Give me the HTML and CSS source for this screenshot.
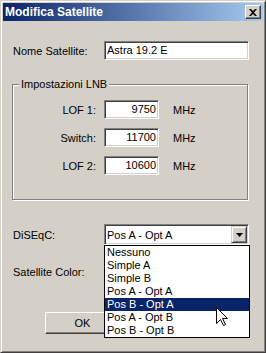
FILE: index.html
```html
<!DOCTYPE html>
<html lang="it">
<head>
    <meta charset="UTF-8">
    <title>Modifica Satellite</title>
    <link rel="stylesheet" href="styles.css">
</head>
<body>
    <div class="window">
        <div class="titlebar">
            <span class="title">Modifica Satellite</span>
            <button class="close-btn">
                <svg width="8" height="7" viewBox="0 0 8 7"><path d="M0 0h2l2 2 2-2h2L5 3.5 8 7H6L4 5 2 7H0l3-3.5z" fill="#000"/></svg>
            </button>
        </div>
        <div class="dialog">
            <div class="row">
                <label class="lbl">Nome Satellite:</label>
                <div class="edit wide">Astra 19.2 E</div>
            </div>
            <fieldset class="group">
                <legend>Impostazioni LNB</legend>
                <div class="lnb-row">
                    <span class="lnb-lbl">LOF 1:</span>
                    <div class="edit num">9750</div>
                    <span class="unit">MHz</span>
                </div>
                <div class="lnb-row">
                    <span class="lnb-lbl">Switch:</span>
                    <div class="edit num">11700</div>
                    <span class="unit">MHz</span>
                </div>
                <div class="lnb-row">
                    <span class="lnb-lbl">LOF 2:</span>
                    <div class="edit num">10600</div>
                    <span class="unit">MHz</span>
                </div>
            </fieldset>
            <div class="row combo-row">
                <label class="lbl">DiSEqC:</label>
                <div class="combo open">
                    <span class="combo-text">Pos A - Opt A</span>
                    <span class="combo-btn">
                        <svg width="7" height="4" viewBox="0 0 7 4"><path d="M0 0h7L3.5 4z" fill="#000"/></svg>
                    </span>
                    <ul class="listbox">
                        <li>Nessuno</li>
                        <li>Simple A</li>
                        <li>Simple B</li>
                        <li>Pos A - Opt A</li>
                        <li class="selected">Pos B - Opt A</li>
                        <li>Pos A - Opt B</li>
                        <li>Pos B - Opt B</li>
                    </ul>
                </div>
            </div>
            <div class="row color-row">
                <label class="lbl">Satellite Color:</label>
                <!-- colour picker sits under the open list -->
                <div class="combo">
                    <span class="combo-text"></span>
                    <span class="combo-btn">
                        <svg width="7" height="4" viewBox="0 0 7 4"><path d="M0 0h7L3.5 4z" fill="#000"/></svg>
                    </span>
                </div>
            </div>
            <div class="buttons">
                <button class="btn">OK</button>
            </div>
        </div>
        <svg class="cursor" width="13" height="20" viewBox="0 0 13 20">
            <path d="M0.5 0.5V16.5L4.5 12.5L7.5 18.5L9.5 17.5L6.5 11.5H11.5Z" fill="#fff" stroke="#000" stroke-width="1"/>
        </svg>
    </div>
</body>
</html>
```

FILE: styles.css
```css
* {
    box-sizing: border-box;
}
body {
    margin: 0;
    background: #d4d0c8;
    font-family: "Liberation Sans", Arial, sans-serif;
    font-size: 11px;
    color: #000;
}
.window {
    position: relative;
    width: 266px;
    height: 353px;
    padding: 2px;
    background: #d4d0c8;
    border: 1px solid;
    border-color: #d4d0c8 #404040 #404040 #d4d0c8;
    box-shadow: inset 1px 1px 0 #fff, inset -1px -1px 0 #808080;
}
.titlebar {
    display: flex;
    align-items: center;
    justify-content: space-between;
    height: 18px;
    padding: 0 2px;
    background: linear-gradient(to right, #0a246a, #a6caf0);
}
.title {
    color: #fff;
    font-weight: bold;
    font-size: 12px;
}
.close-btn {
    display: flex;
    align-items: center;
    justify-content: center;
    width: 16px;
    height: 14px;
    padding: 0;
    background: #d4d0c8;
    border: 1px solid;
    border-color: #fff #404040 #404040 #fff;
    box-shadow: inset -1px -1px 0 #808080;
}
.dialog {
    padding: 20px 0 0 10px;
}
.row {
    display: flex;
    align-items: center;
    height: 19px;
}
.lbl {
    width: 91px;
}
.edit {
    height: 19px;
    padding: 0 2px;
    line-height: 17px;
    white-space: nowrap;
    background: #fff;
    border: 1px solid;
    border-color: #808080 #fff #fff #808080;
    box-shadow: inset 1px 1px 0 #404040, inset -1px -1px 0 #d4d0c8;
}
.edit.wide {
    width: 145px;
}
.edit.num {
    width: 55px;
    text-align: right;
}
.group {
    width: 236px;
    min-width: 0;
    margin: 18px 0 0 -1px;
    padding: 9px 0 24px 0;
    border: 1px solid #808080;
    box-shadow: 1px 1px 0 #fff, inset 1px 1px 0 #fff;
}
.group legend {
    margin-left: 6px;
    padding: 0 2px;
    line-height: 13px;
    background: #d4d0c8;
}
.lnb-row {
    display: flex;
    align-items: center;
    height: 19px;
}
.lnb-row + .lnb-row {
    margin-top: 9px;
}
.lnb-lbl {
    width: 83px;
    margin-right: 8px;
    text-align: right;
}
.unit {
    margin-left: 14px;
}
.combo-row {
    height: 21px;
    margin-top: 24px;
}
.color-row {
    height: 21px;
    margin-top: 16px;
}
.combo {
    position: relative;
    display: flex;
    align-items: center;
    width: 145px;
    height: 21px;
    background: #fff;
    border: 1px solid;
    border-color: #808080 #fff #fff #808080;
    box-shadow: inset 1px 1px 0 #404040, inset -1px -1px 0 #d4d0c8;
}
.combo-text {
    flex: 1;
    padding-left: 2px;
}
.combo-btn {
    display: flex;
    align-items: center;
    justify-content: center;
    width: 16px;
    height: 17px;
    margin-right: 1px;
    background: #d4d0c8;
    border: 1px solid;
    border-color: #d4d0c8 #404040 #404040 #d4d0c8;
    box-shadow: inset 1px 1px 0 #fff, inset -1px -1px 0 #808080;
}
.listbox {
    position: absolute;
    top: 20px;
    left: -1px;
    z-index: 2;
    width: 146px;
    margin: 0;
    padding: 0;
    list-style: none;
    background: #fff;
    border: 1px solid #000;
}
.listbox li {
    height: 13px;
    padding-left: 2px;
    line-height: 13px;
    white-space: nowrap;
}
.listbox li.selected {
    background: #0a246a;
    color: #fff;
}
.buttons {
    display: flex;
    gap: 10px;
    margin-top: 30px;
    padding-left: 32px;
}
.btn {
    width: 75px;
    height: 22px;
    padding: 0;
    font-family: inherit;
    font-size: 11px;
    background: #d4d0c8;
    border: 1px solid;
    border-color: #fff #404040 #404040 #fff;
    box-shadow: inset -1px -1px 0 #808080;
}
.cursor {
    position: absolute;
    left: 215px;
    top: 306px;
    z-index: 3;
}
```
